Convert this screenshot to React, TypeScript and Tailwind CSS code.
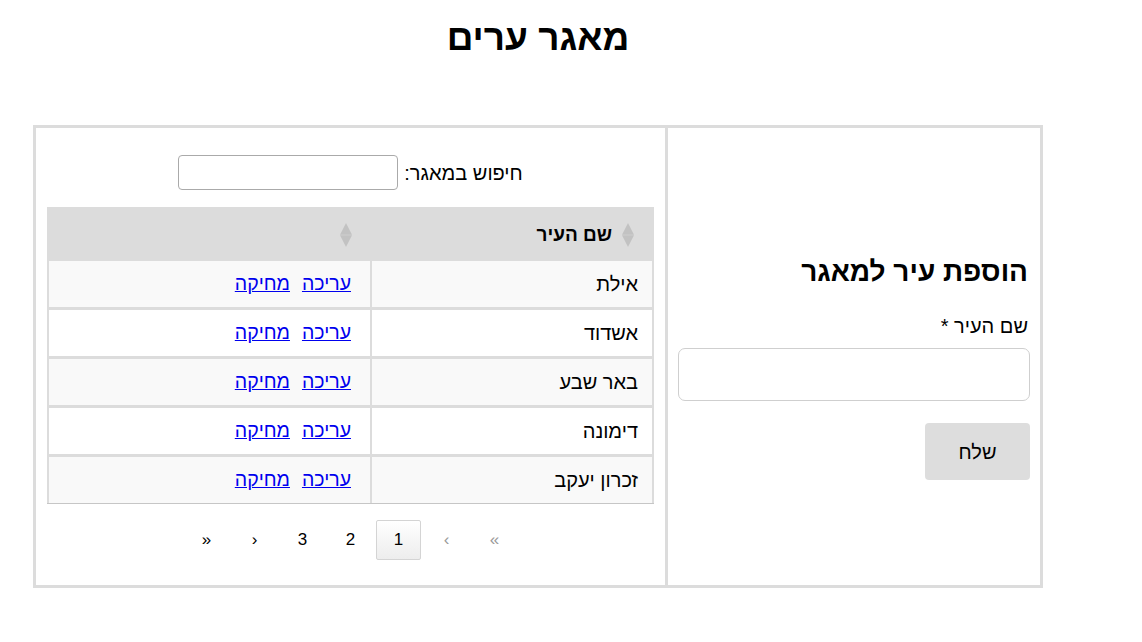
const cities = ["אילת", "אשדוד", "באר שבע", "דימונה", "זכרון יעקב"]

function SortIcon() {
  return (
    <svg width="12" height="24" viewBox="0 0 12 24" className="shrink-0">
      <polygon points="6,0 12,11.8 0,11.8" fill="#c2c2c2" />
      <polygon points="0,12.2 12,12.2 6,24" fill="#c2c2c2" />
    </svg>
  )
}

function PageBtn({ label, active, disabled }: { label: string; active?: boolean; disabled?: boolean }) {
  return (
    <span
      className={
        active
          ? "flex h-[40px] w-[45px] items-center justify-center rounded-[2px] border border-[#d4d4d4] bg-gradient-to-b from-white to-[#ededed] text-[17px] text-black"
          : disabled
          ? "flex h-[40px] w-[45px] items-center justify-center text-[17px] text-[#9a9a9a]"
          : "flex h-[40px] w-[45px] items-center justify-center text-[17px] text-black"
      }
    >
      {label}
    </span>
  )
}

export default function App() {
  return (
    <div dir="rtl" className="min-h-screen bg-white font-['Liberation_Sans',Arial,sans-serif] text-black">
      <div className="ml-[33px] mr-auto w-[1010px]">
        <h1 className="pt-[16px] text-center text-[37px] font-bold leading-[44px]">מאגר ערים</h1>

        <div className="mt-[65px] flex h-[463px] border-[3px] border-[#dcdcdc]">
          {/* add city form */}
          <section className="flex w-[375px] flex-col border-l-[3px] border-[#dcdcdc] px-[10px] pt-[127px]">
            <h2 className="pr-[2px] text-[28px] font-bold leading-[34px]">הוספת עיר למאגר</h2>
            <label className="mt-[25px] pr-[2px] text-[20px] leading-[24px]">שם העיר *</label>
            <input
              type="text"
              className="mt-[10px] h-[53px] w-full rounded-[7px] border border-[#cfcfcf] bg-white px-2"
            />
            <button className="mt-[22px] h-[57px] w-[105px] self-start rounded-[4px] bg-[#dddddd] text-[20px] text-black">
              שלח
            </button>
          </section>

          {/* cities table */}
          <section className="flex flex-1 flex-col px-[11px] pt-[27px]">
            <div className="flex items-center justify-center gap-[6px]">
              <label className="text-[20px] leading-[24px]">חיפוש במאגר:</label>
              <input
                type="text"
                className="h-[35px] w-[220px] rounded-[4px] border border-[#aaaaaa] bg-white px-2"
              />
            </div>

            <div className="mt-[17px] flex flex-col gap-[3px] border-b border-[#c6c6c6] bg-[#dcdcdc] px-[2px]">
              <div className="flex h-[51px] gap-[2px]">
                <div className="flex w-[280px] items-center gap-[10px] pr-[18px] pt-[5px]">
                  <SortIcon />
                  <span className="text-[19px] font-bold">שם העיר</span>
                </div>
                <div className="flex flex-1 items-center pr-[18px] pt-[5px]">
                  <SortIcon />
                </div>
              </div>
              {cities.map((city, i) => (
                <div key={city} className="flex h-[46px] gap-[2px]">
                  <div
                    className={`flex w-[280px] items-center pr-[14px] text-[20px] ${i % 2 === 0 ? "bg-[#f9f9f9]" : "bg-white"}`}
                  >
                    {city}
                  </div>
                  <div
                    className={`flex flex-1 items-center gap-[12px] pr-[19px] text-[19.5px] ${i % 2 === 0 ? "bg-[#f9f9f9]" : "bg-white"}`}
                  >
                    <a href="#" className="text-[#0000ee] underline">עריכה</a>
                    <a href="#" className="text-[#0000ee] underline">מחיקה</a>
                  </div>
                </div>
              ))}
            </div>

            <div className="mt-[16px] flex justify-center gap-[3px]">
              <PageBtn label="»" disabled />
              <PageBtn label="›" disabled />
              <PageBtn label="1" active />
              <PageBtn label="2" />
              <PageBtn label="3" />
              <PageBtn label="‹" />
              <PageBtn label="«" />
            </div>
          </section>
        </div>
      </div>
    </div>
  )
}
